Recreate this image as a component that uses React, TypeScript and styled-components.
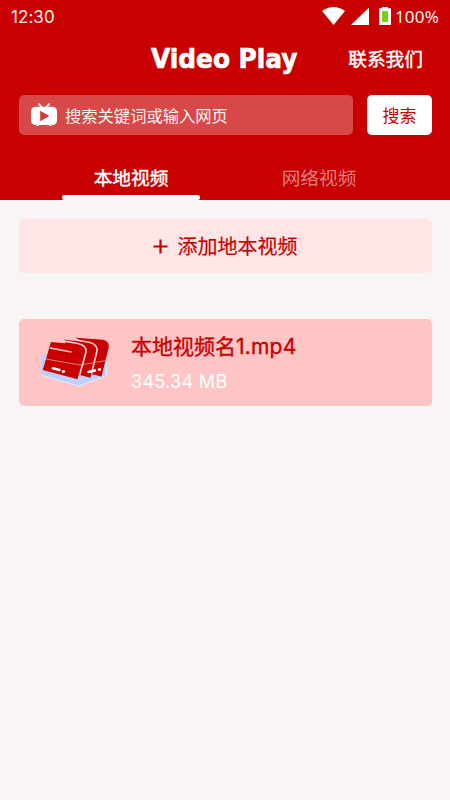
import React from 'react';
import styled, { createGlobalStyle } from 'styled-components';

const RED = '#c80000';
const CJK = '"Noto Sans CJK SC", sans-serif';

const GlobalStyle = createGlobalStyle`
  *, *::before, *::after { box-sizing: border-box; }
  html, body { margin: 0; background: #f9f5f4; }
  button { border: 0; margin: 0; padding: 0; cursor: pointer; }
`;

const Screen = styled.div`
  width: 450px;
  height: 800px;
  overflow: hidden;
  background: #f9f5f4;
  font-family: ${CJK};
`;

const Header = styled.header`
  height: 200px;
  display: flex;
  flex-direction: column;
  background: ${RED};
  color: #fff;
`;

const StatusBar = styled.div`
  height: 32px;
  display: flex;
  align-items: center;
  justify-content: space-between;
  padding: 1px 11px 0 11px;
`;

const Clock = styled.span`
  font: 400 17px/20px Inter, sans-serif;
  letter-spacing: 0.05px;
  opacity: 0.94;
`;

const StatusIcons = styled.div`
  display: flex;
  align-items: center;
`;

const Percent = styled.span`
  margin-left: 3px;
  font: 400 17px/20px "Noto Sans", sans-serif;
  letter-spacing: 0.2px;
  opacity: 0.94;
`;

const TitleBar = styled.div`
  height: 54px;
  display: grid;
  grid-template-columns: 150px 150px 1fr;
  align-items: center;
  padding-left: 1px;
`;

const Title = styled.h1`
  grid-column: 2;
  margin: 0;
  font: 700 26px/32px "DejaVu Sans", sans-serif;
  white-space: nowrap;
  -webkit-text-stroke: 0.7px #fff;
  transform: scaleX(0.955);
  transform-origin: left center;
`;

const Contact = styled.button`
  justify-self: end;
  margin-right: 27px;
  padding-bottom: 2px;
  background: none;
  color: #fff;
  font: 400 18.7px/28px ${CJK};
  -webkit-text-stroke: 0.4px currentColor;
`;

const SearchRow = styled.div`
  height: 40px;
  margin-top: 9px;
  display: flex;
  gap: 14px;
  padding: 0 18px 0 19px;
`;

const SearchField = styled.div`
  flex: 1;
  display: flex;
  align-items: center;
  gap: 8px;
  padding-left: 12px;
  border-radius: 5px;
  background: #d84848;
`;

const Placeholder = styled.span`
  font: 400 16.3px/24px ${CJK};
  opacity: 0.94;
`;

const SearchButton = styled.button`
  width: 65px;
  border-radius: 5px;
  background: #fff;
  color: ${RED};
  font: 400 17px/24px ${CJK};
`;

const Tabs = styled.nav`
  height: 65px;
  display: grid;
  grid-template-columns: 138px 138px;
  justify-content: start;
  column-gap: 50px;
  padding-left: 62px;
`;

const Tab = styled.button<{ $active?: boolean }>`
  display: flex;
  flex-direction: column;
  align-items: center;
  justify-content: flex-end;
  background: none;
  color: ${(p) => (p.$active ? '#fff' : '#e47e7e')};
  font: 400 18.7px/28px ${CJK};
  -webkit-text-stroke: ${(p) => (p.$active ? '0.4px' : '0')} currentColor;

  &::after {
    content: '';
    width: 100%;
    height: 5px;
    margin-top: 4px;
    border-radius: 3px;
    background: ${(p) => (p.$active ? '#fff' : 'transparent')};
  }
`;

const Content = styled.main`
  display: flex;
  flex-direction: column;
  gap: 46px;
  padding: 18.5px 18.5px 0;
`;

const AddButton = styled.button`
  height: 54.5px;
  display: flex;
  align-items: center;
  justify-content: center;
  gap: 10px;
  padding-top: 1px;
  border-radius: 5px;
  background: #ffe5e5;
  color: ${RED};
  font: 400 20px/30px ${CJK};
  -webkit-text-stroke: 0.2px currentColor;
`;

const VideoRow = styled.article`
  height: 87px;
  display: flex;
  gap: 21px;
  padding-left: 21.5px;
  border-radius: 5px;
  background: #ffc5c5;
`;

const Thumb = styled.svg`
  margin-top: 17px;
`;

const Details = styled.div`
  display: flex;
  flex-direction: column;
`;

const FileName = styled.span`
  margin-top: 11px;
  color: ${RED};
  font: 400 21px/31px ${CJK};
  -webkit-text-stroke: 0.35px currentColor;
`;

const Latin = styled.span`
  font-family: Inter, sans-serif;
  letter-spacing: 0.2px;
`;

const FileSize = styled.span`
  margin-top: 8px;
  color: #fff;
  font: 400 18px/24px Inter, sans-serif;
  letter-spacing: 0.3px;
`;

const SignalIcons = () => (
  <svg width="70" height="20" viewBox="321 6 70 20" fill="#fff">
    <path d="M321 10 Q332.5 2 344 10 L332.5 24Z" />
    <path d="M350 24 L368 6.5 V24Z" />
    <path d="M381 6 H387 V7.2 H390 V24 H378 V7.2 H381Z" />
    <path d="M381 10 H387 V21 H381Z" fill="#76d314" />
  </svg>
);

const TvIcon = () => (
  <svg width="26" height="24" viewBox="0 0 26 24">
    <path d="M8 1.2 L11 4.5 M18 1.2 L15 4.5" stroke="#fff" strokeWidth="1.8" strokeLinecap="round" />
    <rect x="0" y="3.8" width="26" height="18.2" rx="4.5" fill="#fff" />
    <path d="M5.5 21 V23 H8 V21 M18 21 V23 H20.5 V21" fill="#fff" />
    <path d="M9.2 7.8 L18.4 12.9 L9.2 18.2Z" fill="#d43c3c" />
  </svg>
);

const FoldersIcon = () => (
  <Thumb width="70" height="52" viewBox="40 336 70 52">
    <path d="M41.5 355.5 L78 347 L107 361 V375.500 L79 386.500 L41.500 375.500Z" fill="#bfcfff" />
    <path d="M42 375.500 L79 386 L106.500 375.500 V361" fill="none" stroke="#e5eaff" />
    <path d="M75.500 337.700 L103 339.800 Q109.500 341.500 108.800 347 L101.500 376.500 L87 373 L92 347Z" fill={RED} />
    <path d="M64 339.800 L88 342 Q97 344 96.300 351 L90.500 377.800 L76 374Z" fill={RED} />
    <path d="M51 342 L78 344.500 Q86.500 346 85.500 352 L77.500 379.300 L42.700 370Z" fill={RED} />
    <path d="M76 340 L89 342.200 Q98 344.500 97 351 L91.500 373.500" fill="none" stroke="#ffd0d2" strokeWidth="1.6" />
    <path d="M64 341.200 L78 343.500 Q87 345.500 86 352 L78.500 379" fill="none" stroke="#ffd0d2" strokeWidth="1.7" />
    <path d="M50 348 L71.500 352" fill="none" stroke="#ffc5c5" strokeWidth="1.7" />
    <path d="M43 358.500 L80 365 L106.500 360.500" fill="none" stroke="#ffc5c5" strokeOpacity=".6" />
    <path d="M53 368.300 L59.500 370 M63 371.500 H64 M88.500 372 L95 370.500 M99 369.500 H100" fill="none" stroke="#fff" strokeWidth="2.500" strokeLinecap="round" />
  </Thumb>
);

const PlusIcon = () => (
  <svg width="15" height="15" viewBox="0 0 15 15">
    <path d="M0.500 7.500 H14.500 M7.500 0.500 V14.500" stroke={RED} strokeWidth="2.200" />
  </svg>
);

export default function App() {
  return (
    <Screen>
      <GlobalStyle />
      <Header>
        <StatusBar>
          <Clock>12:30</Clock>
          <StatusIcons>
            <SignalIcons />
            <Percent>100%</Percent>
          </StatusIcons>
        </StatusBar>
        <TitleBar>
          <Title>Video Play</Title>
          <Contact>联系我们</Contact>
        </TitleBar>
        <SearchRow>
          <SearchField>
            <TvIcon />
            <Placeholder>搜索关键词或输入网页</Placeholder>
          </SearchField>
          <SearchButton>搜索</SearchButton>
        </SearchRow>
        <Tabs>
          <Tab $active>本地视频</Tab>
          <Tab>网络视频</Tab>
        </Tabs>
      </Header>
      <Content>
        <AddButton>
          <PlusIcon />
          添加地本视频
        </AddButton>
        <VideoRow>
          <FoldersIcon />
          <Details>
            <FileName>
              本地视频名<Latin>1.mp4</Latin>
            </FileName>
            <FileSize>345.34 MB</FileSize>
          </Details>
        </VideoRow>
      </Content>
    </Screen>
  );
}
